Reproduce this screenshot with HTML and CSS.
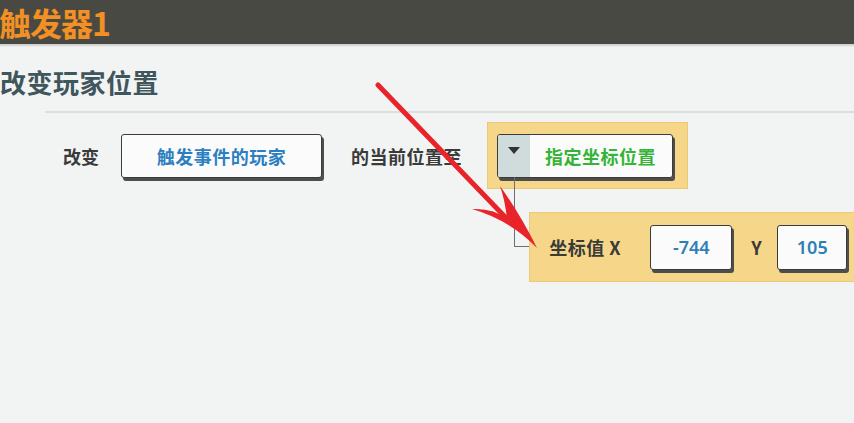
FILE: index.html
```html
<!DOCTYPE html>
<html lang="zh">
<head>
<meta charset="utf-8">
<title>触发器1</title>
<link rel="stylesheet" href="styles.css">
</head>
<body>
<div class="page">
  <header class="topbar"><h1 class="title">触发器1</h1></header>
  <div class="shade"></div>
  <h2 class="subtitle">改变玩家位置</h2>
  <div class="divider"></div>
  <div class="editor">
    <div class="row1">
      <span class="label l1">改变</span>
      <div class="btn player">触发事件的玩家</div>
      <span class="label l2">的当前位置至</span>
      <div class="slot">
        <div class="btn select">
          <span class="drop"><span class="tri"></span></span>
          <span class="select-text">指定坐标位置</span>
        </div>
      </div>
    </div>
    <div class="row2">
      <div class="connector"></div>
      <div class="slot coords">
        <span class="label l3">坐标值 X</span>
        <div class="btn num nx">-744</div>
        <span class="label l4">Y</span>
        <div class="btn num ny">105</div>
      </div>
    </div>
  </div>
  <svg class="arrow" width="854" height="423" viewBox="0 0 854 423">
    <line x1="378" y1="85" x2="508" y2="220" stroke="#e8232a" stroke-width="5" stroke-linecap="round"/>
    <path d="M537,248 Q510,220 472,209 Q494,208 507,219 Q505,200 500,186 Q520,214 537,248 Z" fill="#e8232a"/>
  </svg>
</div>
</body>
</html>
```
FILE: styles.css
```css
html, body {
  margin: 0;
  padding: 0;
  background: #f2f3f3;
  overflow: hidden;
}
.page {
  position: relative;
  width: 854px;
  height: 423px;
  overflow: hidden;
  font-family: "Noto Sans CJK SC", "Noto Sans", sans-serif;
  font-weight: 700;
}
.topbar {
  height: 44px;
  background: #494943;
  display: flex;
  align-items: center;
}
.title {
  margin: 0 0 0 -1px;
  font-size: 32px;
  line-height: 44px;
  color: #f39023;
  font-weight: 700;
  letter-spacing: -1px;
}
.shade {
  height: 3px;
  background: linear-gradient(#c9cac8, #eeefee);
}
.subtitle {
  margin: 20px 0 0 0;
  font-size: 26px;
  line-height: 30px;
  color: #3f565c;
  font-weight: 700;
  letter-spacing: 0.5px;
}
.divider {
  margin: 14px 0 0 45px;
  height: 2px;
  background: #dddfde;
}
.editor {
  padding-left: 63px;
  margin-top: 9px;
}
.row1 {
  display: flex;
  align-items: center;
  height: 67px;
}
.label {
  font-size: 18px;
  color: #3a3a3a;
  white-space: nowrap;
}
.l1 { width: 38px; margin-right: 20px; }
.l2 { width: 117px; margin: 0 19px 0 29px; letter-spacing: 0.5px; }
.btn {
  box-sizing: border-box;
  height: 44px;
  background: #fbfbfb;
  border: 1.5px solid #3b3b3b;
  border-radius: 3px;
  box-shadow: 2px 3px 0 #4d4d4a;
  display: flex;
  align-items: center;
  justify-content: center;
  font-size: 18px;
}
.player {
  width: 201px;
  color: #2c7fc1;
  letter-spacing: 0.5px;
}
.slot {
  box-sizing: border-box;
  height: 67px;
  background: #f6d789;
  border: 1px solid #ecc978;
  display: flex;
  align-items: center;
  padding: 0 14px 0 9px;
}
.select {
  width: 176px;
  justify-content: flex-start;
  overflow: hidden;
}
.drop {
  width: 32px;
  align-self: stretch;
  background: #cfdcdb;
  display: flex;
  justify-content: center;
  padding-top: 12px;
  box-sizing: border-box;
}
.tri {
  width: 0;
  height: 0;
  border-left: 6px solid transparent;
  border-right: 6px solid transparent;
  border-top: 7px solid #2f3333;
}
.select-text {
  margin-left: 15px;
  color: #35b437;
  letter-spacing: 0.5px;
}
.row2 {
  display: flex;
  align-items: flex-start;
  margin: 23px 0 0 451px;
}
.connector {
  box-sizing: border-box;
  width: 16px;
  height: 70px;
  margin-top: -35px;
  border-left: 1.5px solid #6c6f75;
  border-bottom: 1.5px solid #6c6f75;
}
.coords {
  width: 340px;
  height: 70px;
  padding: 0 0 0 19px;
  border-right: none;
}
.l3 { width: 101px; letter-spacing: 0.5px; }
.l4 { width: 26px; margin-left: 19px; }
.num {
  height: 45px;
  color: #2f7fb6;
  font-family: "Noto Sans", "Noto Sans CJK SC", sans-serif;
  font-weight: 600;
}
.nx { width: 82px; }
.ny { width: 70px; }
.arrow {
  position: absolute;
  left: 0;
  top: 0;
  pointer-events: none;
}
```
